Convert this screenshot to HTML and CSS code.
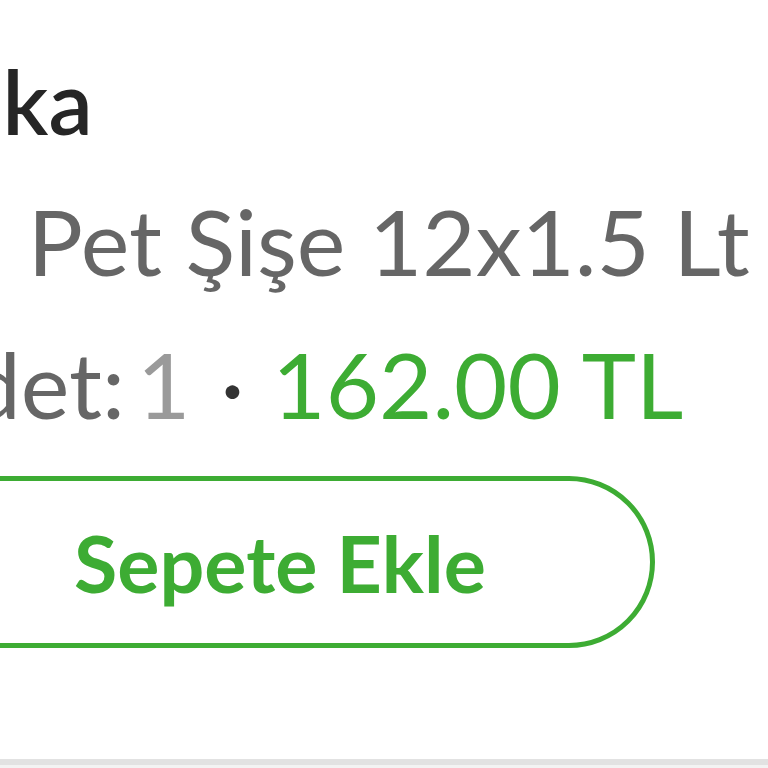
FILE: index.html
```html
<!DOCTYPE html>
<html lang="tr">
<head>
<meta charset="utf-8">
<link rel="stylesheet" href="styles.css">
</head>
<body>
<div class="page">
  <div class="card">
    <div class="brand">Saka</div>
    <div class="name">Su Pet Şişe 12x1.5 Lt</div>
    <div class="meta"><span class="label">Adet:</span><span class="qty">1</span><span class="dot">·</span><span class="price">162.00 TL</span></div>
    <button class="add-btn">Sepete Ekle</button>
  </div>
  <div class="divider"></div>
</div>
</body>
</html>
```
FILE: styles.css
```css
html, body {
  margin: 0;
  padding: 0;
  background: #ffffff;
  overflow: hidden;
}
body {
  font-family: Lato, "Open Sans", sans-serif;
  width: 768px;
  height: 768px;
}
.page {
  display: flex;
  flex-direction: column;
  height: 768px;
}
.card {
  display: flex;
  flex-direction: column;
  align-items: flex-start;
  padding-top: 41px;
  height: 719px;
  box-sizing: border-box;
}
.brand {
  font-size: 88px;
  font-weight: 600;
  line-height: 120px;
  color: #262626;
  margin-left: -89px;
  white-space: nowrap;
}
.name {
  font-size: 92px;
  line-height: 120px;
  color: #666666;
  margin-top: 20px;
  margin-left: -96px;
  white-space: nowrap;
}
.meta {
  font-size: 92px;
  line-height: 120px;
  color: #666666;
  margin-top: 23px;
  margin-left: -92px;
  white-space: nowrap;
}
.label {
  margin-right: 12px;
}
.qty {
  color: #9a9a9a;
}
.dot {
  color: #333333;
  margin: 0 28px 0 30px;
}
.price {
  color: #3dac33;
}
.add-btn {
  margin-top: 32px;
  margin-left: -95px;
  width: 750px;
  height: 172px;
  box-sizing: border-box;
  border: 5px solid #3dac33;
  border-radius: 86px;
  background: #ffffff;
  color: #3dac33;
  font-family: Lato, "Open Sans", sans-serif;
  font-size: 79px;
  font-weight: 700;
  padding: 0;
}
.divider {
  height: 6px;
  background: #e2e2e2;
  flex: none;
  margin-top: 40px;
}
.page::after {
  content: "";
  flex: 1;
  background: #f3f3f3;
}
```
